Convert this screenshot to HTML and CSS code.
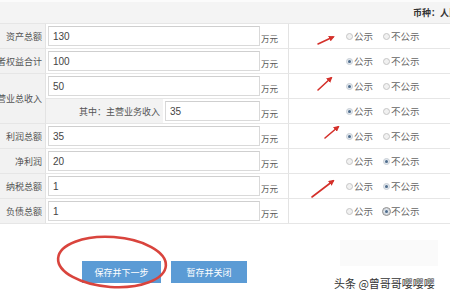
FILE: index.html
```html
<!DOCTYPE html>
<html lang="zh">
<head>
<meta charset="utf-8">
<title>form</title>
<link rel="stylesheet" href="styles.css">
</head>
<body>
<div class="page">
  <div class="topbar"><span class="currency">币种：人民币</span></div>
  <div class="form">
    <div class="label"><span>资产总额</span></div>
    <div class="value"><span class="input">130</span><span class="unit">万元</span></div>
    <div class="pub"><span class="radio"></span><span class="opt">公示</span><span class="radio"></span><span class="opt">不公示</span></div>

    <div class="label"><span>所有者权益合计</span></div>
    <div class="value"><span class="input">100</span><span class="unit">万元</span></div>
    <div class="pub"><span class="radio on"></span><span class="opt">公示</span><span class="radio"></span><span class="opt">不公示</span></div>

    <div class="label tall"><span>营业总收入</span></div>
    <div class="value"><span class="input">50</span><span class="unit">万元</span></div>
    <div class="pub"><span class="radio on"></span><span class="opt">公示</span><span class="radio"></span><span class="opt">不公示</span></div>
    <div class="value sub"><span class="sublabel">其中：主营业务收入</span><span class="input short">35</span><span class="unit">万元</span></div>
    <div class="pub"><span class="radio on"></span><span class="opt">公示</span><span class="radio"></span><span class="opt">不公示</span></div>

    <div class="label"><span>利润总额</span></div>
    <div class="value"><span class="input">35</span><span class="unit">万元</span></div>
    <div class="pub"><span class="radio on"></span><span class="opt">公示</span><span class="radio"></span><span class="opt">不公示</span></div>

    <div class="label"><span>净利润</span></div>
    <div class="value"><span class="input">20</span><span class="unit">万元</span></div>
    <div class="pub"><span class="radio"></span><span class="opt">公示</span><span class="radio on"></span><span class="opt">不公示</span></div>

    <div class="label"><span>纳税总额</span></div>
    <div class="value"><span class="input">1</span><span class="unit">万元</span></div>
    <div class="pub"><span class="radio"></span><span class="opt">公示</span><span class="radio on"></span><span class="opt">不公示</span></div>

    <div class="label"><span>负债总额</span></div>
    <div class="value"><span class="input">1</span><span class="unit">万元</span></div>
    <div class="pub"><span class="radio"></span><span class="opt">公示</span><span class="radio on focus"></span><span class="opt">不公示</span></div>
  </div>
  <div class="actions">
    <button class="btn">保存并下一步</button>
    <button class="btn">暂存并关闭</button>
  </div>

  <svg class="marks" width="450" height="300" viewBox="0 0 450 300">
    <defs>
      <marker id="ah" markerWidth="6" markerHeight="6" refX="4" refY="3" orient="auto" markerUnits="userSpaceOnUse">
        <path d="M0,0 L6,3 L0,6 Z" fill="#d4302a"/>
      </marker>
    </defs>
    <g stroke="#d4302a" stroke-width="1.6" stroke-linecap="round" fill="none">
      <line x1="318" y1="44" x2="333" y2="37" marker-end="url(#ah)"/>
      <line x1="318" y1="90" x2="331" y2="78" marker-end="url(#ah)"/>
      <line x1="325" y1="138" x2="338" y2="127" marker-end="url(#ah)"/>
      <line x1="312" y1="197" x2="333" y2="181" marker-end="url(#ah)"/>
    </g>
    <ellipse cx="112" cy="262" rx="54" ry="25" transform="rotate(4 112 262)" fill="none" stroke="#d9443d" stroke-width="2.6"/>
  </svg>

  <div class="wm-box"></div>
  <div class="watermark">头条 @曾哥哥嘤嘤嘤</div>
</div>
</body>
</html>
```

FILE: styles.css
```css
html, body {
  margin: 0;
  padding: 0;
  overflow: hidden;
  background: #fff;
}
.page {
  position: relative;
  width: 450px;
  height: 300px;
  overflow: hidden;
  font-family: "Noto Sans CJK SC", "Liberation Sans", sans-serif;
  color: #444;
}
.topbar {
  height: 24px;
  box-sizing: border-box;
  border-top: 2px solid #fbfbfb;
  border-bottom: 1px solid #e6e6e6;
  background: #f4f4f4;
  display: flex;
  align-items: center;
  padding-left: 413px;
  white-space: nowrap;
}
.currency {
  font-size: 9px;
  font-weight: bold;
  color: #333;
}
.form {
  display: grid;
  grid-template-columns: 46px 243px 1fr;
  grid-auto-rows: 25px;
}
.form > div {
  box-sizing: border-box;
  border-bottom: 1px solid #e6e6e6;
}
.label {
  background: #f2f2f2;
  border-right: 1px solid #e3e3e3;
  display: flex;
  align-items: center;
  justify-content: flex-end;
  overflow: hidden;
  white-space: nowrap;
  padding-right: 3px;
  font-size: 9px;
  color: #555;
}
.label.tall {
  grid-row: span 2;
}
.value {
  border-right: 1px solid #e3e3e3;
  display: flex;
  align-items: center;
  padding-left: 2px;
}
.value.sub {
  padding-left: 0;
  align-items: stretch;
}
.sublabel {
  width: 117px;
  box-sizing: border-box;
  background: #f3f3f3;
  display: flex;
  align-items: center;
  justify-content: flex-end;
  padding-right: 3px;
  font-size: 9px;
  color: #555;
  white-space: nowrap;
}
.value.sub .input {
  align-self: center;
  margin-left: 2px;
}
.value.sub .unit {
  align-self: center;
}
.input {
  width: 212px;
  height: 20px;
  box-sizing: border-box;
  border: 1px solid #d9d9d9;
  border-top-color: #cfcfcf;
  background: #fff;
  display: flex;
  align-items: center;
  padding-left: 4px;
  font-family: "Liberation Sans", sans-serif;
  font-size: 10px;
  color: #444;
}
.input.short {
  width: 95px;
}
.unit {
  font-size: 8.5px;
  color: #555;
  margin-left: 1px;
  padding-top: 4px;
}
.pub {
  display: flex;
  align-items: center;
  padding-left: 57px;
  font-size: 9.5px;
  color: #666;
  white-space: nowrap;
}
.radio {
  width: 7px;
  height: 7px;
  box-sizing: border-box;
  border-radius: 50%;
  border: 1px solid #c6c6c6;
  background: #f1f1f1;
  margin-right: 1px;
  display: flex;
  align-items: center;
  justify-content: center;
}
.radio.on {
  border-color: #c9cfd6;
  background: #e2e7ee;
}
.radio.on::after {
  content: "";
  width: 3px;
  height: 3px;
  border-radius: 50%;
  background: #4f6d8c;
}
.radio.focus {
  outline: 1px solid #8a8a8a;
  outline-offset: 0;
}
.opt {
  margin-right: 10px;
}
.actions {
  display: flex;
  gap: 10px;
  padding-left: 82px;
  margin-top: 37px;
}
.btn {
  width: 79px;
  height: 22px;
  border: none;
  background: #5b9bd5;
  color: #fff;
  font-family: "Noto Sans CJK SC", sans-serif;
  font-size: 9px;
  padding: 0;
}
.btn + .btn {
  width: 76px;
}
.marks {
  position: absolute;
  left: 0;
  top: 0;
  pointer-events: none;
}
.wm-box {
  position: absolute;
  left: 340px;
  top: 240px;
  width: 98px;
  height: 26px;
  background: rgba(0, 0, 0, 0.018);
}
.watermark {
  position: absolute;
  left: 334px;
  top: 275px;
  font-size: 11px;
  color: #333;
  white-space: nowrap;
  text-shadow: 0 0 1px #fff;
}
```
